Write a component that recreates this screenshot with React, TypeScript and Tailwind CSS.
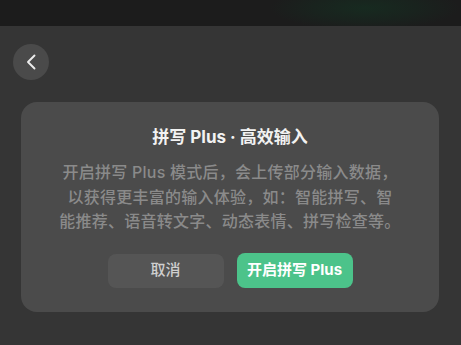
import React from 'react';

export default function App() {
  return (
    <div
      className="w-[461px] h-[345px] overflow-hidden bg-[#353535] flex flex-col"
      style={{ fontFamily: '"Inter", "Noto Sans CJK SC", sans-serif' }}
    >
      <div className="h-[26px] shrink-0 bg-[#1c1c1c] bg-[radial-gradient(ellipse_95px_22px_at_365px_8px,#172a20_0%,#19231e_55%,#1c1c1c_100%)]" />

      <div className="mt-[18px] ml-[13px]">
        <button className="w-[36px] h-[36px] rounded-full bg-[#4a4a4a] flex items-center justify-center">
          <svg width="18" height="18" viewBox="0 0 18 18" fill="none">
            <path d="M12.5 2.5 L6 9 L12.5 15.5" stroke="#ececec" strokeWidth="1.9" strokeLinecap="round" strokeLinejoin="round" />
          </svg>
        </button>
      </div>

      <div className="mt-[22px] ml-[21px] mr-[22px] rounded-[16px] bg-[#4b4b4b] pt-[23px] pb-[24px] flex flex-col items-center">
        <div className="text-[17px] leading-[24px] font-bold text-[#f2f2f2]">拼写 Plus · 高效输入</div>
        <div className="mt-[11px] text-[16px] leading-[24.5px] tracking-[0.25px] font-medium text-[#8a8a8a] text-center whitespace-nowrap">
          开启拼写 Plus 模式后，会上传部分输入数据，
          <br />
          以获得更丰富的输入体验，如：智能拼写、智
          <br />
          能推荐、语音转文字、动态表情、拼写检查等。
        </div>
        <div className="mt-[20px] flex gap-[13px]">
          <button className="w-[116px] h-[34px] rounded-[8px] bg-[#555555] text-[15px] font-medium text-[#cfcfcf]">
            取消
          </button>
          <button className="w-[116px] h-[35px] -mt-px rounded-[8px] bg-[#4cc38a] text-[15px] font-bold text-white">
            开启拼写 Plus
          </button>
        </div>
      </div>
    </div>
  );
}
